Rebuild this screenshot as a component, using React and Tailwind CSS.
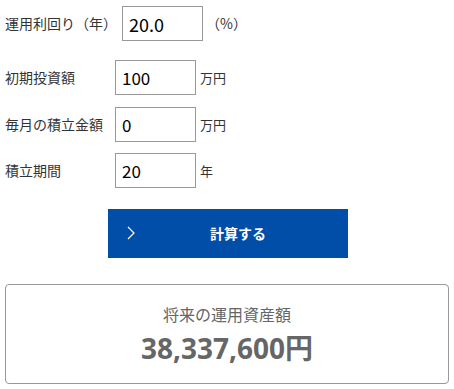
import { useState } from 'react';

const font = { fontFamily: '"Noto Sans CJK JP", "Noto Sans", sans-serif' };

const Row = ({ label, value, unit, onChange, className }) => (
  <div className={`flex items-center h-[35px] ${className}`}>
    <span className="w-[115px] pl-[5px] text-[14px] text-[#333] whitespace-nowrap">{label}</span>
    <input
      className="w-[81px] h-[35px] border border-[#999] px-[6px] text-[17px] text-black outline-none"
      value={value}
      onChange={onChange}
    />
    <span className="ml-[4px] text-[13px] text-[#333]">{unit}</span>
  </div>
);

export default function App() {
  const [rate, setRate] = useState('20.0');
  const [initial, setInitial] = useState('100');
  const [monthly, setMonthly] = useState('0');
  const [years, setYears] = useState('20');

  return (
    <div className="w-[454px] h-[389px] bg-white pt-[6px]" style={font}>
      {/* 運用利回り */}
      <div className="flex items-center h-[35px]">
        <span className="w-[122px] pl-[5px] text-[14px] text-[#333] whitespace-nowrap">運用利回り（年）</span>
        <input
          className="w-[81px] h-[35px] border border-[#999] px-[6px] text-[18px] text-black outline-none"
          value={rate}
          onChange={(e) => setRate(e.target.value)}
        />
        <span className="ml-[3px] text-[14px] text-[#333]">（%）</span>
      </div>

      <Row className="mt-[19px]" label="初期投資額" value={initial} unit="万円" onChange={(e) => setInitial(e.target.value)} />
      <Row className="mt-[12px]" label="毎月の積立金額" value={monthly} unit="万円" onChange={(e) => setMonthly(e.target.value)} />
      <Row className="mt-[11px]" label="積立期間" value={years} unit="年" onChange={(e) => setYears(e.target.value)} />

      {/* 計算ボタン */}
      <div className="mt-[21px] ml-[108px] w-[240px] h-[49px] bg-[#004ea8] flex items-center relative text-white">
        <svg className="absolute left-[19px] top-[17px]" width="8" height="14" viewBox="0 0 8 14" fill="none">
          <path d="M1 1l6 6-6 6" stroke="#fff" strokeWidth="1.2" />
        </svg>
        <span className="w-full text-center text-[14px] font-bold pl-[20px]">計算する</span>
      </div>

      {/* 結果 */}
      <div className="mt-[26px] mx-[5px] h-[100px] border border-[#999] rounded-[4px] flex flex-col items-center justify-center text-[#666]">
        <div className="text-[16px] leading-[20px]">将来の運用資産額</div>
        <div className="mt-[8px] text-[28px] font-bold leading-[32px]" style={{ fontFamily: '"Noto Sans", "Noto Sans CJK JP", sans-serif' }}>38,337,600円</div>
      </div>
    </div>
  );
}
